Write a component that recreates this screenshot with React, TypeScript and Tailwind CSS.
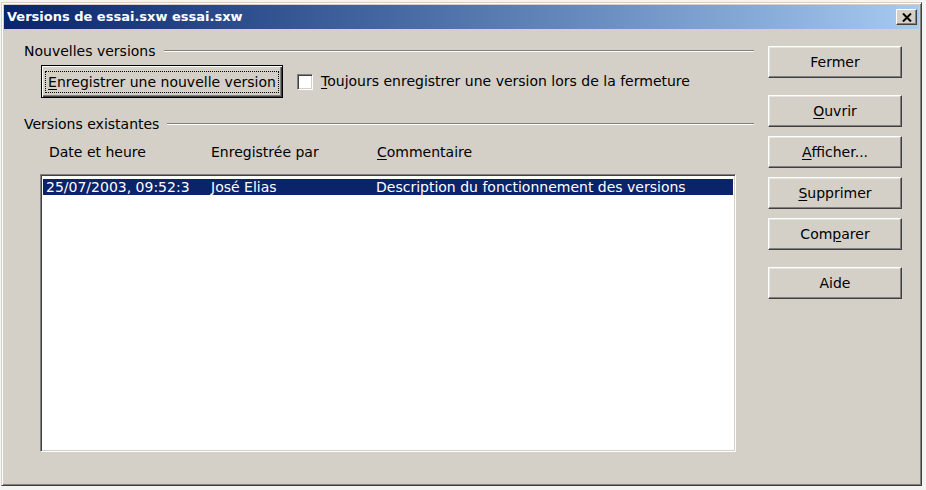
import type { ReactNode } from 'react';

// Boîte de dialogue « Versions » (OpenOffice sous Windows 2000)

const FONT = { fontFamily: '"DejaVu Sans", "Liberation Sans", sans-serif' };

function U({ children }: { children: ReactNode }) {
  return <span className="underline underline-offset-2">{children}</span>;
}

function Btn({ children, className = '' }: { children: ReactNode; className?: string }) {
  return (
    <button
      type="button"
      className={`flex h-[32px] w-[134px] items-center justify-center border border-t-white border-l-white border-b-[#404040] border-r-[#404040] bg-[#d4d0c8] text-[14px] text-black shadow-[inset_-1px_-1px_0_#808080,inset_1px_1px_0_#e6e4de] ${className}`}
    >
      {children}
    </button>
  );
}

function Etched({ label }: { label: string }) {
  return (
    <div className="flex h-[16px] items-center gap-[8px]">
      <span className="leading-[16px]">{label}</span>
      <div className="h-[2px] flex-1 border-t border-b border-t-[#808080] border-b-white" />
    </div>
  );
}

export default function App() {
  return (
    <div className="h-[490px] w-[926px] overflow-hidden bg-[#f4f4f2] pt-[2px]" style={FONT}>
      <div className="ml-[1px] flex h-[484px] w-[921px] flex-col border border-t-[#d4d0c8] border-l-[#d4d0c8] border-b-[#404040] border-r-[#404040] bg-[#d4d0c8] p-[2px] shadow-[inset_1px_1px_0_#ffffff,inset_-1px_-1px_0_#808080]">
        {/* barre de titre */}
        <div className="flex h-[24px] items-center justify-between bg-gradient-to-r from-[#0a246a] to-[#a6caf0] pl-[3px] pr-[2px]">
          <span className="text-[13px] font-bold text-white">Versions de essai.sxw essai.sxw</span>
          <div className="flex h-[16px] w-[21px] items-center justify-center border border-t-white border-l-white border-b-[#404040] border-r-[#404040] bg-[#d4d0c8] shadow-[inset_-1px_-1px_0_#808080]">
            <svg width="10" height="9" viewBox="0 0 10 9">
              <path d="M1 0.5 L9 8.5 M9 0.5 L1 8.5" stroke="#000" strokeWidth="2" />
            </svg>
          </div>
        </div>

        <div className="flex items-start pl-[20px] text-[14px] text-black">
          {/* partie gauche */}
          <div className="flex w-[730px] flex-col pt-[14px]">
            <Etched label="Nouvelles versions" />
            <div className="mt-[6px] flex items-center pl-[17px]">
              <button
                type="button"
                className="flex h-[33px] w-[242px] items-center justify-center border border-black bg-[#d4d0c8] shadow-[inset_1px_1px_0_#ffffff,inset_-1px_-1px_0_#404040,inset_-2px_-2px_0_#808080]"
              >
                <span className="border border-dotted border-black px-[2px] py-[2px] leading-[16px]">
                  <U>E</U>nregistrer une nouvelle version
                </span>
              </button>
              <div className="ml-[14px] h-[16px] w-[16px] border border-t-[#808080] border-l-[#808080] border-b-white border-r-white bg-white shadow-[inset_1px_1px_0_#404040,inset_-1px_-1px_0_#d4d0c8]" />
              <span className="ml-[8px]">
                <U>T</U>oujours enregistrer une version lors de la fermeture
              </span>
            </div>

            <div className="mt-[18px]">
              <Etched label="Versions existantes" />
            </div>

            <div className="mt-[12px] flex h-[16px] items-center leading-[16px]">
              <span className="box-content w-[162px] pl-[25px]">Date et heure</span>
              <span className="w-[166px]">Enregistrée par</span>
              <span>
                <U>C</U>ommentaire
              </span>
            </div>

            {/* liste */}
            <div className="ml-[16px] mt-[14px] h-[278px] w-[696px] border border-t-[#808080] border-l-[#808080] border-b-white border-r-white bg-white px-[2px] pt-[4px] shadow-[inset_1px_1px_0_#404040,inset_-1px_-1px_0_#d4d0c8]">
              <div className="flex h-[16px] items-center bg-[#0a246a] pl-[3px] leading-[16px] text-white">
                <span className="w-[165px] overflow-hidden whitespace-nowrap">25/07/2003, 09:52:3</span>
                <span className="w-[165px]">José Elias</span>
                <span>Description du fonctionnement des versions</span>
              </div>
            </div>
          </div>

          {/* boutons */}
          <div className="ml-[14px] flex flex-col pt-[17px]">
            <Btn>Fermer</Btn>
            <Btn className="mt-[17px]">
              <U>O</U>uvrir
            </Btn>
            <Btn className="mt-[9px]">
              <U>A</U>fficher...
            </Btn>
            <Btn className="mt-[9px]">
              <U>S</U>upprimer
            </Btn>
            <Btn className="mt-[9px]">
              Com<U>p</U>arer
            </Btn>
            <Btn className="mt-[17px]">Aide</Btn>
          </div>
        </div>
      </div>
    </div>
  );
}
